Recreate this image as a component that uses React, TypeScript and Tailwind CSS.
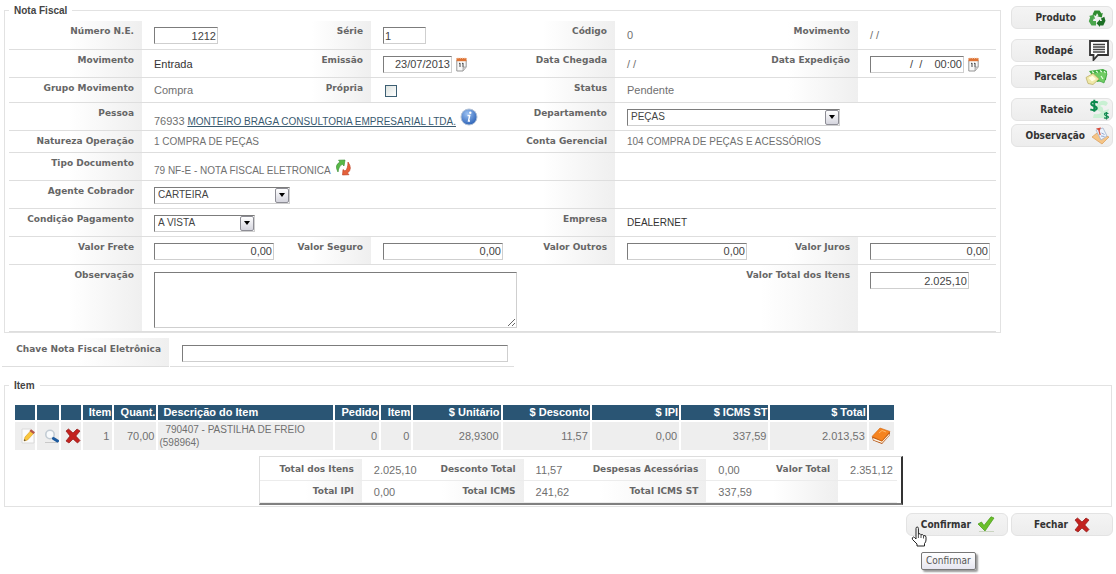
import React from 'react';

const arial = "font-['Liberation_Sans',Arial,sans-serif]";
const verdana = "font-['DejaVu_Sans',Verdana,sans-serif]";
const tahoma = "font-['DejaVu_Sans_Condensed','DejaVu_Sans',sans-serif]";

const inset = 'border border-t-[#7c7c7c] border-l-[#7c7c7c] border-r-[#cfcfcf] border-b-[#cfcfcf] bg-white';
const labelCell = `min-w-0 bg-linear-to-r from-white from-20% to-[#efefef] pr-2 text-right text-[9px] leading-3 font-bold whitespace-nowrap text-[#666] first:from-45% ${verdana}`;

/* ---------- icons ---------- */

const RecycleIcon = () => (
  <svg viewBox="0 0 18 18" className="size-[18px]">
    <path d="M4.500 5.500 6.500 1.500h5L13.500 4.500l1.300-.7-1 4.700-4.600-1.300 1.300-.8L9 4.200 7.800 7z" fill="#2e8b2e" />
    <path d="M1 7l4.700-1.200L7.200 10l-1.400-.6L4.900 12H8v4.500H3.500L.8 12.300l1.400-4.200z" fill="#4aa64c" />
    <path d="M13 9.500l3.300-1.700 1.200 4-2.200 4.700H12v1.400L8.500 14.200 12 10.500v1.500h2z" fill="#1d6f25" />
  </svg>
);

const CommentIcon = () => (
  <svg viewBox="0 0 20 21" className="h-[21px] w-5">
    <path d="M1 1h18v14H9l-4.500 5v-5H1z" fill="#fff" stroke="#333" strokeWidth="1.800" />
    <path d="M4 4.500h12M4 7h12M4 9.500h12M4 12h12" stroke="#444" strokeWidth="1.300" />
  </svg>
);

const MoneyIcon = () => (
  <svg viewBox="0 0 23 18" className="h-[18px] w-[23px]">
    <path d="M4 3 18 1l4 2-1 9-9 2z" fill="#3fae3e" />
    <path d="M8 5l12-2 2 3-3 9-9-4z" fill="#6fcb62" stroke="#2f9a35" strokeWidth=".6" />
    <path d="M7 3.500l2 1.500M11 3l2 1.500M15 2.500l2 1.500M19 3l1.500 2M16 8l2 3" stroke="#e4ffe0" strokeWidth="1.200" />
    <path d="M1 9.500l7-4 6 5.500-6 5.500-5-1z" fill="#efe8a8" stroke="#b7a95c" strokeWidth=".7" />
    <path d="M3.500 10l4-2.200L11 11l-4 2.500z" fill="#fffce2" />
  </svg>
);

const DollarsIcon = () => (
  <svg viewBox="0 0 21 21" className="size-[21px]">
    <path d="M10 3q6-3 9 1l-2 3q-4-2-6 0 4 1 3 5l6-2-3 9H4l1-4q6 1 7-2-5-1-5-5z" fill="#c9f0d3" />
    <path d="M9 3.500Q5.500 2 3 3.200q-2 2 .8 3.300l3 1.200q2 1.500 0 3-2 1-5.500-.3M5.300.8v12" fill="none" stroke="#0b8a4d" strokeWidth="2" />
    <path d="M19.500 14.500q-4-1-4 .8 0 1 2 1.500t2 1.500q-.8 1.500-4.500.5M17.500 13v7.500" fill="none" stroke="#128a52" strokeWidth="1.200" />
  </svg>
);

const NoteIcon = () => (
  <svg viewBox="0 0 19 19" className="size-[19px]">
    <path d="M1 11l5-4 12 4-7 7z" fill="#f6c586" stroke="#d99b57" strokeWidth=".7" />
    <path d="M5 4l7-2 4 8-6 4z" fill="#edf3fb" stroke="#9fb3cf" strokeWidth=".8" />
    <path d="M5 2.500l5-1L8.500 5z" fill="#d94b3a" />
    <path d="M7.800 4l1.400 5" stroke="#d94b3a" strokeWidth="1.200" />
    <path d="M10.500 7l3 1.500M10 10l3.500.5" stroke="#7d96c4" strokeWidth=".8" />
  </svg>
);

const CalendarIcon = () => (
  <svg viewBox="0 0 11 15" className="h-[15px] w-[11px] shrink-0">
    <path d="M.8 3.500h9.400v6.500L7 14H.8z" fill="#f8f8f8" stroke="#8a8a8a" strokeWidth=".9" />
    <path d="M7 14v-4h3.200" fill="#ccc" stroke="#999" strokeWidth=".7" />
    <path d="M.5 1h10v3.200H.5z" fill="#dd7436" />
    <path d="M2 0v2M4.300 0v2M6.600 0v2M8.900 0v2" stroke="#fbe0cc" strokeWidth=".7" />
    <path d="M3 6.700l1-.7v4M6 6.700l1-.7v4" fill="none" stroke="#444" strokeWidth="1" />
  </svg>
);

const InfoIcon = () => (
  <svg viewBox="0 0 18 18" className="size-[18px] shrink-0">
    <defs>
      <radialGradient id="info" cx=".4" cy=".3" r=".8">
        <stop offset="0" stopColor="#9cc2f3" />
        <stop offset="1" stopColor="#1f57b0" />
      </radialGradient>
    </defs>
    <circle cx="9" cy="9" r="8" fill="url(#info)" stroke="#b3c2d6" />
    <circle cx="10.300" cy="4.800" r="1.200" fill="#fff" />
    <path d="M7.500 7.500h2.200L8.500 13H10" fill="none" stroke="#fff" strokeWidth="1.400" />
  </svg>
);

const RefreshIcon = () => (
  <svg viewBox="0 0 17 17" className="size-[17px] shrink-0">
    <path d="M3 13Q-1 6 5 3L3.500 1.200 10 1 9 7 7.300 5.300Q3.800 7 3 13z" fill="#58b947" stroke="#348a2c" strokeWidth=".6" />
    <path d="M13 3q5 7-.5 11l1.500 1.700L7.500 16 8 10.500l2 1.500q3-2 3-9z" fill="#e5603a" stroke="#b83a1e" strokeWidth=".6" />
  </svg>
);

const EditIcon = () => (
  <svg viewBox="0 0 15 16" className="h-4 w-[15px]">
    <path d="M2 1h9l3 3v11H2z" fill="#fbfbfb" stroke="#d4d4d4" strokeWidth=".8" />
    <path d="M4 13l1-4 5.500-6 3 2.500-6 6.500z" fill="#f9c63c" stroke="#d99a22" strokeWidth=".6" />
    <path d="M9.500 3L11 1.200l4 3-1.500 1.800z" fill="#b5564a" />
    <path d="M4 13l.4-1.800 1.500 1z" fill="#333" />
  </svg>
);

const SearchIcon = () => (
  <svg viewBox="0 0 15 15" className="size-[15px]">
    <path d="M1 13.500h13" stroke="#c9c9c9" />
    <circle cx="6" cy="5.500" r="4.200" fill="#f8fafc" stroke="#c3ccd4" strokeWidth="1.600" />
    <path d="M9.500 9.500l4 2.500" stroke="#1c5a9f" strokeWidth="3" strokeLinecap="round" />
  </svg>
);

const CrossIcon = () => (
  <svg viewBox="0 0 16 16" className="size-4">
    <path d="M1 3l2.500-2L8 5l4-4 3 2-4.200 5L15 12.500 12.500 15 8 11l-4 4-3-2 4-5z" fill="#c3221f" stroke="#8f1613" strokeWidth=".7" />
  </svg>
);

const BookIcon = () => (
  <svg viewBox="0 0 20 18" className="h-[18px] w-5">
    <path d="M1 10l1 3.500 9 3.500 8-9V5z" fill="#b4500f" />
    <path d="M2 11l9 3.500 7.500-8V8L11 16l-8.500-3z" fill="#fff3df" />
    <path d="M1 9.500L9 1l10 3.500-8 9.500z" fill="#f5831f" stroke="#d2660f" strokeWidth=".6" />
    <path d="M8 6l3-2.500 4 1.500" fill="none" stroke="#ffb766" />
  </svg>
);

const CheckIcon = () => (
  <svg viewBox="0 0 18 17" className="h-[17px] w-[18px]">
    <path d="M2 15.500h15" stroke="#c9d4c0" />
    <path d="M1 8l3.500-2L7 9.500 14 .8l3 1.200L8 15z" fill="#6abf2a" stroke="#469a17" strokeWidth=".7" />
  </svg>
);

const HandCursor = () => (
  <svg viewBox="0 0 17 21" className="h-[21px] w-[17px]">
    <path
      d="M5 11V2.500q0-1.500 1.200-1.500t1.200 1.500V8q2-1 2.600.8 2-.8 2.500.8 2.500-.6 2.500 1.600V14q0 2-1.500 3.500V20H6v-2L1.500 13.500Q.5 11.500 2.500 11q1 0 2.500 2z"
      fill="#fff"
      stroke="#222"
      strokeWidth="1"
    />
    <path d="M7.400 8v4M10 9v3M12.500 10v2.500" stroke="#222" strokeWidth=".8" />
  </svg>
);

/* ---------- form pieces ---------- */

const Row = ({ className = '', children }: { className?: string; children: React.ReactNode }) => (
  <div
    className={`grid grid-cols-[133fr_155fr_74fr_154fr_90fr_155fr_88fr_138fr] border-b border-[#dedede] ${className}`}
  >
    {children}
  </div>
);

const Label = ({ htmlFor, className = '', children }: { htmlFor?: string; className?: string; children?: React.ReactNode }) =>
  htmlFor ? (
    <label htmlFor={htmlFor} className={`pt-1 ${labelCell} ${className}`}>
      {children}
    </label>
  ) : (
    <div className={`pt-1 ${labelCell} ${className}`}>{children}</div>
  );

const Value = ({ className = '', children }: { className?: string; children?: React.ReactNode }) => (
  <div className={`flex min-w-0 items-center gap-1 pt-px pl-3 whitespace-nowrap ${className}`}>{children}</div>
);

const TextBox = ({ id, value = '', className }: { id: string; value?: string; className: string }) => (
  <input
    id={id}
    type="text"
    defaultValue={value}
    className={`h-[17px] px-px text-[11px] text-[#444] ${inset} ${className}`}
  />
);

const DropDown = ({ id, value, className }: { id: string; value: string; className: string }) => (
  <span className={`relative block h-[17px] ${className}`}>
    <select id={id} className={`block h-full w-full appearance-none pl-[3px] text-[10px] text-[#444] ${inset}`}>
      <option>{value}</option>
    </select>
    <span className="pointer-events-none absolute top-px right-px flex h-[15px] w-[14px] items-center justify-center rounded-xs border border-[#8d8d95] bg-linear-to-b from-white to-[#d5d5de]">
      <svg viewBox="0 0 6 4" className="h-1 w-1.5">
        <path d="M0 0h6L3 4z" fill="#000" />
      </svg>
    </span>
  </span>
);

const ActionButton = ({ label, icon, className }: { label: string; icon: React.ReactNode; className: string }) => (
  <button
    type="button"
    className={`flex h-[23px] w-[102px] items-center justify-end rounded-md border border-[#e3e3e3] bg-linear-to-b from-[#f4f4f4] to-[#ededed] text-[10px] font-bold text-[#333] ${tahoma} ${className}`}
  >
    {label}
    {icon}
  </button>
);

const columns = [
  { title: '', width: 'w-5' },
  { title: '', width: 'w-[22px]' },
  { title: '', width: 'w-5' },
  { title: 'Item', width: 'w-[29px]' },
  { title: 'Quant.', width: 'w-[42px]' },
  { title: 'Descrição do Item', width: 'w-[174px]' },
  { title: 'Pedido', width: 'w-11' },
  { title: 'Item', width: 'w-[30px]' },
  { title: '$ Unitário', width: 'w-[87px]' },
  { title: '$ Desconto', width: 'w-[87px]' },
  { title: '$ IPI', width: 'w-[87px]' },
  { title: '$ ICMS ST', width: 'w-[87px]' },
  { title: '$ Total', width: 'w-[96px]' },
  { title: '', width: 'w-[25px]' },
];

const totals = [
  [
    ['Total dos Itens', '2.025,10'],
    ['Desconto Total', '11,57'],
    ['Despesas Acessórias', '0,00'],
    ['Valor Total', '2.351,12'],
  ],
  [
    ['Total IPI', '0,00'],
    ['Total ICMS', '241,62'],
    ['Total ICMS ST', '337,59'],
    ['', ''],
  ],
];

const InvoiceForm = () => (
  <fieldset className="min-w-0 flex-1 border border-[#e2e2e2] px-1 pt-0.5">
    <legend className="px-[5px] pt-0.5 text-[10px] leading-4 font-bold text-[#444]">Nota Fiscal</legend>
    <Row className="h-[29px]">
      <Label htmlFor="numero">Número N.E.</Label>
      <Value>
        <TextBox id="numero" value="1212" className="w-16 text-right" />
      </Value>
      <Label htmlFor="serie">Série</Label>
      <Value>
        <TextBox id="serie" value="1" className="w-[43px]" />
      </Value>
      <Label>Código</Label>
      <Value>0</Value>
      <Label>Movimento</Label>
      <Value>/ /</Value>
    </Row>
    <Row className="h-7">
      <Label>Movimento</Label>
      <Value className="text-[#333]">Entrada</Value>
      <Label htmlFor="emissao">Emissão</Label>
      <Value>
        <TextBox id="emissao" value="23/07/2013" className="w-[69px] text-right" />
        <CalendarIcon />
      </Value>
      <Label>Data Chegada</Label>
      <Value>/ /</Value>
      <Label htmlFor="expedicao">Data Expedição</Label>
      <Value>
        <TextBox id="expedicao" value="/  /    00:00" className="w-[94px] text-right" />
        <CalendarIcon />
      </Value>
    </Row>
    <Row className="h-[25px]">
      <Label>Grupo Movimento</Label>
      <Value>Compra</Value>
      <Label htmlFor="propria">Própria</Label>
      <Value>
        <input
          id="propria"
          type="checkbox"
          className="ml-0.5 size-3 appearance-none border border-[#3c5f73] bg-linear-to-br from-[#dde3e0] to-white"
        />
      </Value>
      <Label>Status</Label>
      <Value>Pendente</Value>
      <Label />
      <Value />
    </Row>
    <Row className="h-7">
      <Label>Pessoa</Label>
      <Value className="col-span-3 text-[10px]">
        <span className="pt-2">
          <span className="text-[11px]">76933</span>{' '}
          <a href="#pessoa" className="text-[#3a5a70] underline">
            MONTEIRO BRAGA CONSULTORIA EMPRESARIAL LTDA.
          </a>
        </span>
        <InfoIcon />
      </Value>
      <Label htmlFor="departamento">Departamento</Label>
      <Value className="col-span-3">
        <DropDown id="departamento" value="PEÇAS" className="w-[213px]" />
      </Value>
    </Row>
    <Row className="h-[22px]">
      <Label>Natureza Operação</Label>
      <Value className="col-span-3 text-[10px]">1 COMPRA DE PEÇAS</Value>
      <Label>Conta Gerencial</Label>
      <Value className="col-span-3 text-[10px]">104 COMPRA DE PEÇAS E ACESSÓRIOS</Value>
    </Row>
    <Row className="h-7">
      <Label>Tipo Documento</Label>
      <Value className="col-span-3 text-[10px]">
        <span className="pt-2">79 NF-E - NOTA FISCAL ELETRONICA</span>
        <RefreshIcon />
      </Value>
      <Label />
      <Value className="col-span-3" />
    </Row>
    <Row className="h-7">
      <Label htmlFor="agente">Agente Cobrador</Label>
      <Value className="col-span-3">
        <DropDown id="agente" value="CARTEIRA" className="w-[136px]" />
      </Value>
      <Label />
      <Value className="col-span-3" />
    </Row>
    <Row className="h-7">
      <Label htmlFor="condicao">Condição Pagamento</Label>
      <Value className="col-span-3">
        <DropDown id="condicao" value="A VISTA" className="w-[101px]" />
      </Value>
      <Label>Empresa</Label>
      <Value className="col-span-3 text-[10px] text-[#333]">DEALERNET</Value>
    </Row>
    <Row className="h-7">
      <Label htmlFor="frete">Valor Frete</Label>
      <Value>
        <TextBox id="frete" value="0,00" className="w-[120px] text-right" />
      </Value>
      <Label htmlFor="seguro">Valor Seguro</Label>
      <Value>
        <TextBox id="seguro" value="0,00" className="w-[120px] text-right" />
      </Value>
      <Label htmlFor="outros">Valor Outros</Label>
      <Value>
        <TextBox id="outros" value="0,00" className="w-[120px] text-right" />
      </Value>
      <Label htmlFor="juros">Valor Juros</Label>
      <Value>
        <TextBox id="juros" value="0,00" className="w-[120px] text-right" />
      </Value>
    </Row>
    <Row className="h-[67px]">
      <Label htmlFor="observacao">Observação</Label>
      <div className="col-span-4 min-w-0 pt-[7px] pl-3">
        <textarea id="observacao" className={`block h-14 w-[363px] ${inset}`} />
      </div>
      <Label htmlFor="total-itens" className="col-span-2 from-60%">
        Valor Total dos Itens
      </Label>
      <div className="min-w-0 pt-[7px] pl-3">
        <TextBox id="total-itens" value="2.025,10" className="block w-[99px] text-right" />
      </div>
    </Row>
  </fieldset>
);

const ItemTable = () => (
  <table className="w-full table-fixed border-separate border-spacing-0.5">
    <thead>
      <tr className="h-[15px] bg-[#2a5574] text-[11px] leading-[15px] text-white">
        {columns.map((column, i) => (
          <th
            key={i}
            scope="col"
            className={`whitespace-nowrap ${column.width} ${i === 5 ? 'pl-[5px] text-left' : 'pr-px text-right'}`}
          >
            {column.title}
          </th>
        ))}
      </tr>
    </thead>
    <tbody>
      <tr className="h-7 bg-[#eee] text-right">
        <td>
          <button type="button" aria-label="Editar" className="ml-auto block">
            <EditIcon />
          </button>
        </td>
        <td>
          <button type="button" aria-label="Consultar" className="ml-auto block">
            <SearchIcon />
          </button>
        </td>
        <td>
          <button type="button" aria-label="Excluir" className="ml-auto block">
            <CrossIcon />
          </button>
        </td>
        <td className="pr-[3px]">1</td>
        <td className="pr-0.5">70,00</td>
        <td className="pl-px text-left text-[10px] leading-[13px]">
          <span className="pl-1.5">790407 - PASTILHA DE FREIO</span>
          <br />
          (598964)
        </td>
        <td className="pr-0.5">0</td>
        <td className="pr-0.5">0</td>
        <td className="pr-0.5">28,9300</td>
        <td className="pr-0.5">11,57</td>
        <td className="pr-0.5">0,00</td>
        <td className="pr-0.5">337,59</td>
        <td className="pr-0.5">2.013,53</td>
        <td>
          <button type="button" aria-label="Detalhes" className="mx-auto block">
            <BookIcon />
          </button>
        </td>
      </tr>
    </tbody>
  </table>
);

const Totals = () => (
  <div className="mt-1 mr-[208px] mb-px ml-[254px] border-t border-r-2 border-b-2 border-l border-t-[#ddd] border-r-[#333] border-b-[#808080] border-l-[#ddd] pt-0.5 pr-1">
    {totals.map((line, i) => (
      <div
        key={i}
        className="grid h-[22px] grid-cols-[102fr_59fr_103fr_49fr_134fr_50fr_82fr_59fr] border-b border-[#ececec]"
      >
        {line.map(([name, amount], j) => (
          <React.Fragment key={j}>
            <div className={`pt-1 ${labelCell}`}>{name}</div>
            <div className="min-w-0 pt-1 pl-3 leading-[14px] whitespace-nowrap">{amount}</div>
          </React.Fragment>
        ))}
      </div>
    ))}
  </div>
);

const App = () => (
  <form className={`min-h-screen bg-white pt-px text-[11px] leading-none text-[#707070] ${arial}`}>
    <div className="flex items-start pr-[3px] pl-1">
      <InvoiceForm />
      <aside className="ml-2.5 flex flex-col pt-[5px]">
        <ActionButton label="Produto" icon={<RecycleIcon />} className="gap-3 pr-1.5" />
        <ActionButton label="Rodapé" icon={<CommentIcon />} className="mt-2.5 gap-4 pr-[3px]" />
        <ActionButton label="Parcelas" icon={<MoneyIcon />} className="mt-[3px] gap-2 pr-1" />
        <ActionButton label="Rateio" icon={<DollarsIcon />} className="mt-2.5 gap-4 pr-0.5" />
        <ActionButton label="Observação" icon={<NoteIcon />} className="mt-[3px] gap-1.5 pr-0.5" />
      </aside>
    </div>

    <div className="mt-[5px] ml-0.5 flex h-[29px]">
      <label
        htmlFor="chave"
        className={`w-[167px] border-b border-[#dedede] pt-[5px] ${labelCell}`}
      >
        Chave Nota Fiscal Eletrônica
      </label>
      <div className="ml-px border-b border-[#dedede] pt-[7px] pr-1.5 pl-3">
        <TextBox id="chave" className="block w-[326px]" />
      </div>
    </div>

    <fieldset className="mt-[9px] mr-1 ml-1 border border-[#e2e2e2]">
      <legend className="ml-1 px-[5px] pt-0.5 text-[10px] leading-4 font-bold text-[#444]">Item</legend>
      <div className="pt-[9px] pr-[215px] pl-2">
        <ItemTable />
      </div>
      <Totals />
    </fieldset>

    <div className="mt-1.5 flex justify-end gap-[3px] pr-[3px]">
      <div className="relative">
        <ActionButton label="Confirmar" icon={<CheckIcon />} className="gap-1.5 pr-3" />
        <div className="pointer-events-none absolute top-[13px] left-[5px]">
          <HandCursor />
        </div>
        <div
          role="tooltip"
          className={`absolute top-[39px] left-[15px] rounded-xs border border-[#777] bg-linear-to-b from-white to-[#e6e6f0] px-1 text-[10px] leading-4 text-[#555] shadow-[2px_2px_2px_#999] ${tahoma}`}
        >
          Confirmar
        </div>
      </div>
      <ActionButton label="Fechar" icon={<CrossIcon />} className="gap-1.5 pr-[22px]" />
    </div>
  </form>
);

export default App;
